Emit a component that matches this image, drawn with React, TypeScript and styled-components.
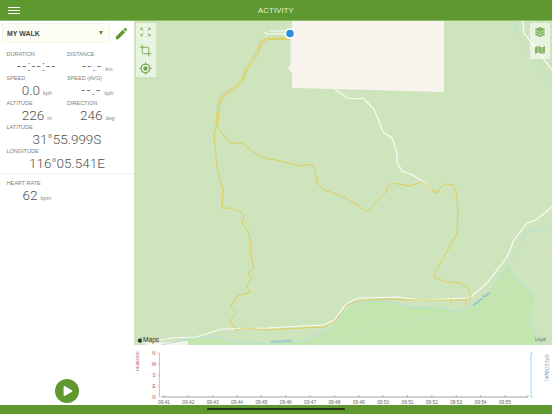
import React from 'react'
import styled, { createGlobalStyle } from 'styled-components'
import { Crop } from 'lucide-react'
import { FaApple, FaLayerGroup, FaMap, FaPlay } from 'react-icons/fa'
import { MdEdit, MdGpsFixed } from 'react-icons/md'

const GREEN = '#5e982e'
const SANS = '"Liberation Sans", Arial, sans-serif'

const GlobalStyle = createGlobalStyle`
	html, body {
		margin: 0;
		padding: 0;
		height: 100%;
		background: #fff;
		font-family: ${SANS};
	}
	#root {
		height: 100%;
	}
`

const route = [
	'M290 38 L267 38 L260 42 L257 52 L250 62 L245 70 L242 80 L233 88 L222 95 L218 103 L216 127 L214 135 L217 167 L223 190 L222 208 L229 208 L241 212 L244 216 L242 223 L249 233 L251 245 L250 250 L254 268 L248 273 L252 277 L247 287 L251 292 L237 296 L231 306 L236 313 L230 321 L237 330 L246 328 L267 330 L301 328 L324 327 L334 322 L344 310',
	'M290 39.5 L268 39.5 L261.5 43.5 L258.5 53.5 L251.5 63.5 L246.5 71.5 L243.5 81.5 L234.5 89.5 L223.5 96.5 L219.5 104.5 L217.5 127',
	'M217 127 L230 143 L242 143 L253 152 L265 158 L280 161 L300 166 L312 164 L315 170 L317 183 L325 190 L344 197 L357 205 L367 212 L376 202 L386 192 L387 187 L392 183 L410 186 L422 182 L430 188 L436 193 L439 192 L432 190',
	'M439 192 L440 188 L445 184 L453 185 L456 190 L458 210 L457 233 L449 248 L441 262 L433 277 L447 282 L461 283 L469 290 L471 297 L466 300 L411 300 L387 299 L357 301 L347 305 L344 309',
	'M451 300 L451 305 M466 300 L466 307',
]

const roads = [
	'M142 343 L172 338 L196 337 L222 329 L267 328 L324 325 L334 320 L344 307 L349 302 L359 298 L397 297 L421 300 L467 298 L472 296 L487 283 L507 257 L514 240 L527 223 L536 220 L552 207',
	'M335 89 L347 98 L355 99 L363 98 L373 108 L380 123 L383 132 L392 138 L397 152 L397 162 L402 171 L413 175 L422 181 L432 190',
	'M523 21 L524 33 L552 70',
	'M289 31 L269 31 M289 34 L267 34 L265 32',
	'M291 36 L291 66',
]

const rivers = [
	'M161 345 L194 338 L212 336 L234 342 L274 343 L307 340 L331 328 L344 313 L357 302 L387 301 L414 308 L434 306 L457 311 L472 307 L491 290 L507 266 L519 248 L527 232 L552 228',
	'M507 266 L521 282 L532 293 L531 323 L541 345',
	'M516 21 L517 33 L527 50 L552 88',
]

const HOURS = ['09:41', '09:42', '09:43', '09:44', '09:45', '09:46', '09:47', '09:48', '09:49', '09:50', '09:51', '09:52', '09:53', '09:54', '09:55']
const HEADINGS = ['N', 'W', 'S', 'E', 'N']

const MapDrawing: React.FC = () => (
	<MapSvg viewBox="134 21 418 324">
		<rect x="134" y="21" width="418" height="324" fill="#cde4bd" />
		<path d="M161 345 L194 338 L212 336 L234 342 L274 343 L307 340 L331 328 L344 313 L357 302 L387 301 L414 308 L434 306 L457 311 L472 307 L491 290 L507 266 L521 282 L532 293 L531 323 L541 345 Z" fill="#c3e6ae" />
		<path d="M145 345 L147 343 L188 341 L188 345 Z" fill="#f8f3ec" />
		<path d="M292 21 L444 21 L444 92 L335 89 L292 88 L292 73 L288 68 L292 63 Z" fill="#f8f3ec" />
		<path d="M314 345 L344 338 L387 323 L434 317 L472 315 L517 285 L552 248" fill="none" stroke="#d5e0c4" strokeWidth="1" />
		<path d="M293 49 L310 59" fill="none" stroke="#ffffff" strokeWidth="2.2" />
		<path d="M293 49 L310 59" fill="none" stroke="#f1ece4" strokeWidth="1" />
		{rivers.map((d) => (
			<path key={d} d={d} fill="none" stroke="#b5e0dc" strokeWidth="1" />
		))}
		{roads.map((d) => (
			<path key={d} d={d} fill="none" stroke="#fbfbf6" strokeWidth="1.2" />
		))}
		{route.map((d) => (
			<path key={d} d={d} fill="none" stroke="#e3c94f" strokeWidth="0.9" />
		))}
		<text x="271" y="343" fontSize="3.6" fill="#5d9ccc" transform="rotate(-4 271 343)" fontFamily={SANS}>Helena River</text>
		<text x="474" y="306" fontSize="3.6" fill="#5d9ccc" transform="rotate(-38 474 306)" fontFamily={SANS}>Helena River</text>
		<circle cx="290" cy="33.5" r="5.5" fill="#fff" />
		<circle cx="290" cy="33.5" r="3.8" fill="#2a8fdc" />
	</MapSvg>
)

const ChartDrawing: React.FC = () => (
	<ChartSvg viewBox="134 345 418 60">
		<text transform="translate(138.5 361) rotate(-90)" textAnchor="middle" fontSize="4.4" fill="#b5525a" fontFamily={SANS}>HEADING</text>
		<path d="M159.5 353 L157.5 353 M159.5 364 L157.5 364 M159.5 375 L157.5 375 M159.5 386 L157.5 386 M159.5 353 L159.5 397" stroke="#e3a6ab" strokeWidth="0.8" fill="none" />
		{HEADINGS.map((h, i) => (
			<text key={i} x="154" y={354.8 + i * 11} textAnchor="middle" fontSize="4.6" fill="#b5525a" fontFamily={SANS}>{h}</text>
		))}
		<path d="M161 397 L528 397" stroke="#8a8a8a" strokeWidth="0.8" fill="none" />
		<path d="M528 395 L528 397" stroke="#8a8a8a" strokeWidth="0.6" />
		{HOURS.map((t, i) => {
			const x = 164 + i * 24.35
			return (
				<g key={t}>
					<path d={`M${x} 395 L${x} 397`} stroke="#8a8a8a" strokeWidth="0.6" />
					<text x={x} y="404.2" textAnchor="middle" fontSize="4.8" fill="#666" fontFamily={SANS}>{t}</text>
				</g>
			)
		})}
		<path d="M533 353 L531 353 L531 397 L533 397" stroke="#8ec8ea" strokeWidth="0.8" fill="none" />
		<text transform="translate(544.5 367.5) rotate(90)" textAnchor="middle" fontSize="4.8" fill="#6f9cc0" fontFamily={SANS}>SPEED(kph)</text>
	</ChartSvg>
)

const ExpandIcon: React.FC = () => (
	<svg width="11" height="10" viewBox="0 0 13 11" fill="none" stroke="#6fa448" strokeWidth="1">
		<path d="M1 1 L4 4 M1 1 L1 3 M1 1 L3 1" />
		<path d="M12 1 L9 4 M12 1 L12 3 M12 1 L10 1" />
		<path d="M1 10 L4 7 M1 10 L1 8 M1 10 L3 10" />
		<path d="M12 10 L9 7 M12 10 L12 8 M12 10 L10 10" />
	</svg>
)

const App: React.FC = () => (
	<Page>
		<GlobalStyle />
		<TopBar>
			<MenuButton>
				<MenuLine />
				<MenuLine />
				<MenuLine />
			</MenuButton>
			<TopTitle>ACTIVITY</TopTitle>
		</TopBar>
		<Middle>
			<Sidebar>
				<SelectRow>
					<SelectBox>
						<SelectText>MY WALK</SelectText>
						<Caret />
					</SelectBox>
					<EditButton>
						<MdEdit size={15} />
					</EditButton>
				</SelectRow>
				<Fields>
					<Field>
						<Label>DURATION</Label>
						<Value $dim>--:--:--</Value>
					</Field>
					<Field>
						<Label>DISTANCE</Label>
						<Value $dim>--.-<Unit>km</Unit></Value>
					</Field>
					<Field>
						<Label>SPEED</Label>
						<Value>0.0<Unit>kph</Unit></Value>
					</Field>
					<Field>
						<Label>SPEED (AVG)</Label>
						<Value $dim>--.-<Unit>kph</Unit></Value>
					</Field>
					<Field>
						<Label>ALTITUDE</Label>
						<Value>226<Unit>m</Unit></Value>
					</Field>
					<Field>
						<Label>DIRECTION</Label>
						<Value>246<Unit>deg</Unit></Value>
					</Field>
					<Field $wide>
						<Label>LATITUDE</Label>
						<Value>31°55.999S</Value>
					</Field>
					<Field $wide>
						<Label>LONGITUDE</Label>
						<Value>116°05.541E</Value>
					</Field>
				</Fields>
				<Divider />
				<Fields>
					<Field>
						<Label>HEART RATE</Label>
						<Value>62<Unit>bpm</Unit></Value>
					</Field>
				</Fields>
				<PlayArea>
					<PlayButton>
						<FaPlay size={10} />
					</PlayButton>
				</PlayArea>
			</Sidebar>
			<Content>
				<MapArea>
					<MapDrawing />
					<LeftTools>
						<ToolButton><ExpandIcon /></ToolButton>
						<ToolButton><Crop size={13} strokeWidth={1.6} /></ToolButton>
						<ToolButton><MdGpsFixed size={13} /></ToolButton>
					</LeftTools>
					<RightTools>
						<ToolButton><FaLayerGroup size={10} /></ToolButton>
						<ToolButton><FaMap size={10} /></ToolButton>
					</RightTools>
					<MapsMark><FaApple size={6} />Maps</MapsMark>
					<LegalMark>Legal</LegalMark>
				</MapArea>
				<ChartDrawing />
			</Content>
		</Middle>
		<BottomBar>
			<HomeIndicator />
		</BottomBar>
	</Page>
)

const Page = styled.div`
	display: flex;
	flex-direction: column;
	width: 552px;
	height: 414px;
	overflow: hidden;
	background: #fff;
`

const TopBar = styled.div`
	position: relative;
	display: flex;
	align-items: center;
	justify-content: center;
	box-sizing: border-box;
	height: 21px;
	flex-shrink: 0;
	background: ${GREEN};
	border-bottom: 1px solid #8dbb69;
`

const MenuButton = styled.div`
	position: absolute;
	left: 8px;
	top: 7px;
	display: flex;
	flex-direction: column;
	gap: 2px;
`

const MenuLine = styled.span`
	display: block;
	width: 12px;
	height: 1px;
	background: #fff;
`

const TopTitle = styled.div`
	color: #e9f2dd;
	font-size: 7.6px;
	letter-spacing: 0.2px;
`

const Middle = styled.div`
	display: flex;
	flex: 1;
	min-height: 0;
`

const Sidebar = styled.div`
	display: flex;
	flex-direction: column;
	width: 134px;
	flex-shrink: 0;
	background: #fff;
`

const SelectRow = styled.div`
	display: flex;
	align-items: center;
	padding: 2px 0 2px 2px;
`

const SelectBox = styled.div`
	display: flex;
	align-items: center;
	justify-content: space-between;
	box-sizing: border-box;
	width: 108px;
	height: 20px;
	padding: 0 6px 0 4px;
	background: #fdfdf6;
	border: 1px solid #f4f4ec;
	border-radius: 2px;
`

const SelectText = styled.div`
	color: #444;
	font-size: 7px;
	font-weight: bold;
`

const Caret = styled.div`
	width: 0;
	height: 0;
	border-left: 2.5px solid transparent;
	border-right: 2.5px solid transparent;
	border-top: 4px solid ${GREEN};
`

const EditButton = styled.div`
	display: flex;
	margin-left: 4px;
	color: ${GREEN};
`

const Fields = styled.div`
	display: grid;
	grid-template-columns: 60.5px 60.5px;
	padding: 0 0 0 6.5px;
	margin-top: 6px;
`

const Field = styled.div<{ $wide?: boolean }>`
	display: flex;
	flex-direction: column;
	height: 24.3px;
	grid-column: ${(props) => (props.$wide ? 'span 2' : 'auto')};
`

const Label = styled.div`
	color: #808080;
	font-size: 5.5px;
	line-height: 7px;
`

const Value = styled.div<{ $dim?: boolean }>`
	color: #505050;
	font-family: Roboto, ${SANS};
	font-weight: 300;
	font-size: ${(props) => (props.$dim ? '14px' : '13.5px')};
	letter-spacing: ${(props) => (props.$dim ? '1.2px' : '0')};
	line-height: 16px;
	text-align: center;
	white-space: nowrap;
`

const Unit = styled.span`
	margin-left: 3px;
	color: #888;
	font-family: ${SANS};
	font-size: 5.5px;
	font-weight: 400;
	letter-spacing: 0;
`

const Divider = styled.div`
	height: 1px;
	margin-top: 1px;
	background: #f1f1f1;
`

const PlayArea = styled.div`
	display: flex;
	flex: 1;
	align-items: flex-end;
	justify-content: center;
	padding-bottom: 2px;
`

const PlayButton = styled.div`
	display: flex;
	align-items: center;
	justify-content: center;
	width: 24px;
	height: 24px;
	padding-left: 2px;
	box-sizing: border-box;
	border-radius: 50%;
	background: ${GREEN};
	color: #fff;
`

const Content = styled.div`
	display: flex;
	flex: 1;
	flex-direction: column;
	min-width: 0;
`

const MapArea = styled.div`
	position: relative;
	height: 324px;
	flex-shrink: 0;
	overflow: hidden;
`

const MapSvg = styled.svg`
	display: block;
	width: 418px;
	height: 324px;
`

const ChartSvg = styled.svg`
	display: block;
	width: 418px;
	height: 60px;
`

const LeftTools = styled.div`
	position: absolute;
	left: 1.5px;
	top: 2px;
	display: flex;
	flex-direction: column;
	width: 20px;
	height: 54px;
	background: rgba(255, 255, 255, 0.55);
	color: #6fa448;
`

const RightTools = styled.div`
	position: absolute;
	right: 2.5px;
	top: 2px;
	display: flex;
	flex-direction: column;
	width: 20px;
	height: 36px;
	background: rgba(255, 255, 255, 0.55);
	color: #86b562;
`

const ToolButton = styled.div`
	display: flex;
	flex: 1;
	align-items: center;
	justify-content: center;
`

const MapsMark = styled.div`
	position: absolute;
	left: 3px;
	bottom: 2px;
	display: flex;
	align-items: center;
	color: #333;
	font-size: 6.6px;
`

const LegalMark = styled.div`
	position: absolute;
	right: 6px;
	bottom: 3px;
	color: #777;
	font-size: 4.5px;
`

const BottomBar = styled.div`
	position: relative;
	height: 9px;
	flex-shrink: 0;
	background: ${GREEN};
`

const HomeIndicator = styled.div`
	position: absolute;
	left: 207px;
	top: 3px;
	width: 138px;
	height: 2px;
	border-radius: 1px;
	background: #26341a;
`

export default App
